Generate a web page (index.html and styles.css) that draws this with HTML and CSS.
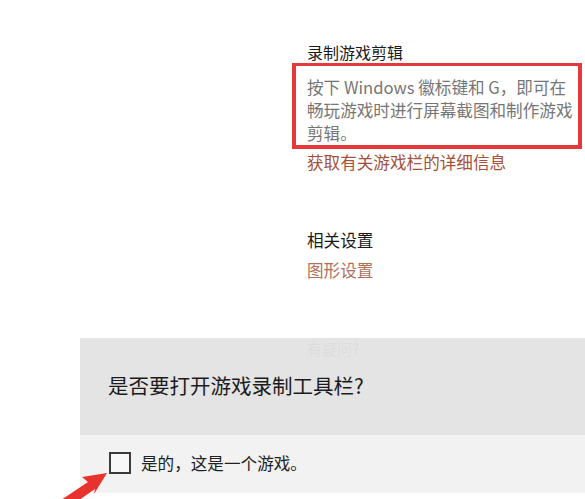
FILE: index.html
```html
<!DOCTYPE html>
<html lang="zh-CN">

<head>
    <meta charset="UTF-8">
    <meta name="viewport" content="width=device-width, initial-scale=1.0">
    <title>游戏栏</title>
    <link rel="stylesheet" href="styles.css">
</head>

<body>
    <!-- Settings page behind the dialog -->
    <div class="settings">
        <h3 class="section-title">录制游戏剪辑</h3>
        <div class="highlight">
            <p class="desc">按下 Windows 徽标键和 G，即可在<br>畅玩游戏时进行屏幕截图和制作游戏<br>剪辑。</p>
        </div>
        <a class="link" href="#">获取有关游戏栏的详细信息</a>

        <h3 class="section-title related">相关设置</h3>
        <a class="link link-soft" href="#">图形设置</a>

        <h3 class="section-title faq">有疑问?</h3>
    </div>

    <!-- Game bar prompt -->
    <div class="dialog">
        <div class="dialog-head">
            <h2>是否要打开游戏录制工具栏?</h2>
        </div>
        <div class="dialog-foot">
            <label class="check">
                <span class="box"></span>
                <span>是的，这是一个游戏。</span>
            </label>
        </div>
    </div>

    <!-- Annotation arrow -->
    <svg class="arrow" width="120" height="80" viewBox="0 0 120 80">
        <polygon points="107,33 82,37 88,42 28,82 36,90 95,49 94,54" fill="#e8322e" />
    </svg>
</body>

</html>
```

FILE: styles.css
```css
/* Global styles */
body {
    font-family: 'Noto Sans CJK SC', 'Noto Sans', sans-serif;
    background-color: #ffffff;
    margin: 0;
    padding: 0;
    width: 585px;
    height: 499px;
    overflow: hidden;
    position: relative;
}

.settings {
    display: flex;
    flex-direction: column;
    align-items: flex-start;
    padding: 41px 0 0 307px;
}

.section-title {
    margin: 0;
    font-size: 16px;
    line-height: 22px;
    font-weight: normal;
    color: #1a1a1a;
}

.highlight {
    box-sizing: border-box;
    width: 290px;
    margin: 0 0 0 -15px;
    padding: 10px 0 0 11px;
    border: 4px solid #e8393a;
    border-top-width: 3px;
}

.desc {
    margin: 0;
    font-size: 16.6px;
    line-height: 23px;
    color: #767676;
    white-space: nowrap;
}

.link {
    margin-top: 2px;
    font-size: 16.6px;
    line-height: 23px;
    color: #a4503a;
    text-decoration: none;
}

.related {
    margin-top: 55px;
    font-size: 16.6px;
    line-height: 23px;
}

.link-soft {
    margin-top: 7px;
    color: #b0705c;
}

.faq {
    margin-top: 56px;
    font-size: 15px;
    color: #8a8a8a;
}

/* Dialog overlay, slightly see-through like the system prompt */
.dialog {
    position: absolute;
    left: 80px;
    right: 0;
    top: 338px;
    display: flex;
    flex-direction: column;
}

.dialog-head {
    height: 97px;
    background-color: rgba(226, 226, 226, 0.93);
    display: flex;
    align-items: center;
    padding: 0 0 3px 28px;
    box-sizing: border-box;
}

.dialog-head h2 {
    margin: 0;
    font-size: 20.5px;
    line-height: 28px;
    font-weight: normal;
    color: #1c1c1c;
}

.dialog-foot {
    height: 58px;
    background-color: #f2f2f2;
    display: flex;
    align-items: center;
    padding: 0 0 2px 29px;
    box-sizing: border-box;
}

.check {
    display: flex;
    align-items: center;
    gap: 10px;
    font-size: 16.6px;
    line-height: 22px;
    color: #222;
}

.box {
    width: 18px;
    height: 18px;
    border: 2px solid #3a3a3a;
    background-color: #f7f7f7;
}

.arrow {
    position: absolute;
    left: 0;
    top: 440px;
}
```
